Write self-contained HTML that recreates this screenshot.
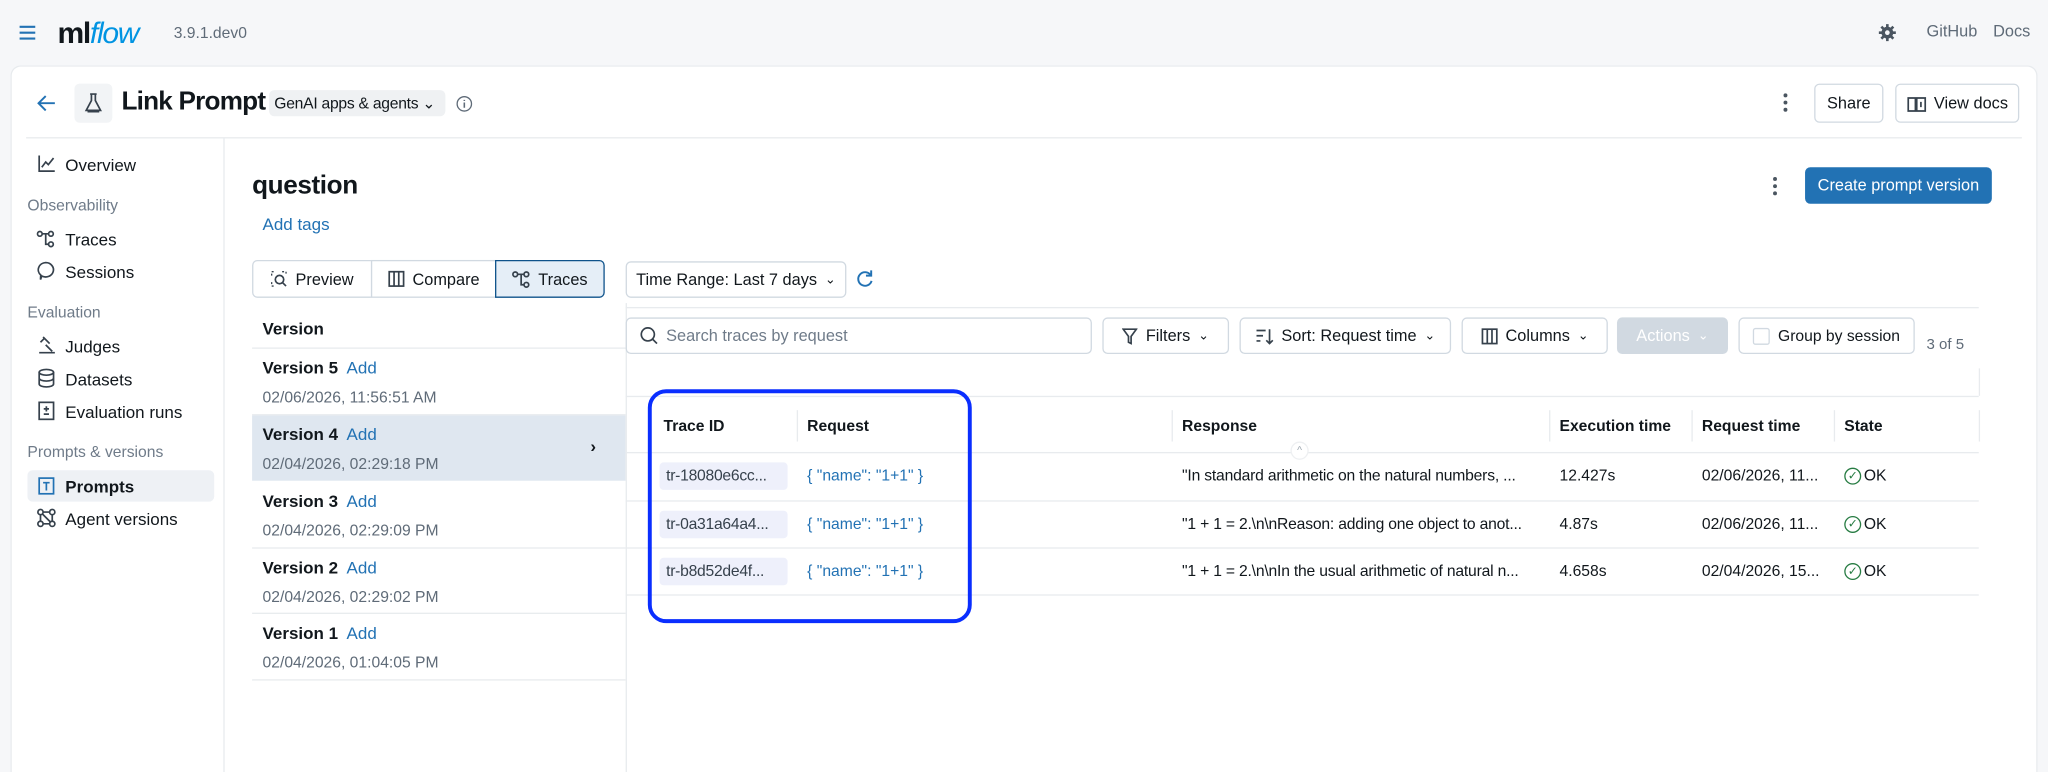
<!DOCTYPE html>
<html><head><meta charset="utf-8"><style>
*{box-sizing:border-box;margin:0;padding:0}
html,body{width:2048px;height:772px;overflow:hidden;background:#f6f7f9}
#w{position:absolute;left:0;top:0;width:1568px;height:591px;overflow:hidden;transform:scale(1.30612,1.3063);transform-origin:0 0;font-family:"Liberation Sans",Arial,sans-serif;color:#11171c;font-size:13px}
.a{position:absolute;white-space:nowrap}
.card{position:absolute;left:8px;top:50px;width:1552px;height:541px;background:#fff;border-radius:8px 8px 0 0;border:1px solid #e8ebee;border-bottom:none}
.hl{position:absolute;background:#e8ebee;height:1px}
.vl{position:absolute;background:#e8ebee;width:1px}
.btn{position:absolute;border:1px solid #d1d9e1;border-radius:4px;background:#fff;display:flex;align-items:center;justify-content:center;gap:6px;font-size:12.5px;color:#11171c}
.sec{color:#6f7b89;font-size:12px}
.blue{color:#2272b4}
.gray{color:#5f6b78}
.ic{stroke:#36414c;fill:none;stroke-width:1.3}
.ok{display:inline-block;width:13px;height:13px;border:1.3px solid #277c43;border-radius:50%;color:#277c43;font-size:9px;text-align:center;line-height:11px;vertical-align:middle;margin-right:2px}
</style></head><body><div id="w">
<svg class="a" style="left:14px;top:19px" width="14" height="12"><path d="M1 1.5h12M1 6h12M1 10.5h12" stroke="#2272b4" stroke-width="1.6"/></svg>
<div class="a" style="left:44px;top:12px;font-size:23px;font-weight:bold;letter-spacing:-1px;color:#11171c">ml<span style="color:#0194e2;font-style:italic;font-weight:normal">flow</span></div>
<div class="a gray" style="left:133px;top:18px;font-size:12px">3.9.1.dev0</div>
<svg class="a" style="left:1438px;top:18px" width="14" height="14" viewBox="0 0 14 14"><circle cx="7" cy="7" r="4.5" fill="#4a5560"/><circle cx="7" cy="7" r="1.8" fill="#f6f7f9"/><path d="M7 0.5v3M7 10.5v3M0.5 7h3M10.5 7h3M2.4 2.4l2 2M9.6 9.6l2 2M2.4 11.6l2-2M9.6 4.4l2-2" stroke="#4a5560" stroke-width="2"/></svg>
<div class="a gray" style="left:1475px;top:17px;font-size:12.5px">GitHub</div>
<div class="a gray" style="left:1526px;top:17px;font-size:12.5px">Docs</div>

<div class="card"></div>
<svg class="a" style="left:28px;top:72px" width="15" height="14"><path d="M14 7H2M7 1.5L1.5 7 7 12.5" stroke="#2272b4" stroke-width="1.5" fill="none"/></svg>
<div class="a" style="left:57px;top:64px;width:29px;height:30px;background:#f2f4f6;border-radius:4px"></div>
<svg class="a" style="left:64px;top:71px" width="15" height="16"><path d="M5 1h5M6 1v5L2 13.5h11L9 6V1" class="ic"/><path d="M3 14.5h9" class="ic"/></svg>
<div class="a" style="left:93px;top:67px;font-size:20px;font-weight:bold;letter-spacing:-0.6px">Link Prompt</div>
<div class="a" style="left:206px;top:69px;width:135px;height:20px;background:#eff1f3;border-radius:4px;font-size:12px;padding:3px 4px;letter-spacing:-0.2px">GenAI apps &amp; agents ⌄</div>
<svg class="a" style="left:349px;top:73px" width="13" height="13"><circle cx="6.5" cy="6.5" r="5.5" fill="none" stroke="#5f6b78"/><path d="M6.5 5.5v4M6.5 3.5v.8" stroke="#5f6b78" stroke-width="1.2"/></svg>
<svg class="a" style="left:1365px;top:71px" width="4" height="15"><circle cx="2" cy="2" r="1.5" fill="#4a5560"/><circle cx="2" cy="7.5" r="1.5" fill="#4a5560"/><circle cx="2" cy="13" r="1.5" fill="#4a5560"/></svg>
<div class="btn" style="left:1389px;top:64px;width:53px;height:30px">Share</div>
<div class="btn" style="left:1451px;top:64px;width:95px;height:30px"><svg width="15" height="13"><path d="M1 2h5.5v10H1zM7.5 2H14v10H7.5z" class="ic"/><path d="M10.7 5v4" class="ic"/></svg>View docs</div>
<div class="hl" style="left:20px;top:105px;width:1528px"></div>

<div class="vl" style="left:171px;top:106px;height:485px"></div>
<svg class="a" style="left:29px;top:119px" width="13" height="13"><path d="M1 0v12h12M3 9l3-4 2 2 4-5" class="ic"/></svg>
<div class="a" style="left:50px;top:119px">Overview</div>
<div class="a sec" style="left:21px;top:150px">Observability</div>
<svg class="a" style="left:28px;top:176px" width="14" height="14"><circle cx="2.5" cy="3" r="1.8" class="ic"/><circle cx="11" cy="3" r="1.8" class="ic"/><circle cx="11" cy="11" r="1.8" class="ic"/><path d="M4.3 3h5M7 3v8h2.2" class="ic"/></svg>
<div class="a" style="left:50px;top:176px">Traces</div>
<svg class="a" style="left:28px;top:200px" width="14" height="15"><path d="M7 1a6 5.5 0 1 1-3 10.3L3 14l.2-3.5A6 5.5 0 0 1 7 1z" class="ic"/></svg>
<div class="a" style="left:50px;top:201px">Sessions</div>
<div class="a sec" style="left:21px;top:232px">Evaluation</div>
<svg class="a" style="left:29px;top:257px" width="14" height="14"><path d="M4 1l5 5M2 5l3-3M1 13h12M6 7l5 5" class="ic"/></svg>
<div class="a" style="left:50px;top:258px">Judges</div>
<svg class="a" style="left:29px;top:282px" width="13" height="15"><ellipse cx="6.5" cy="3" rx="5.5" ry="2.2" class="ic"/><path d="M1 3v9c0 1.3 2.5 2.2 5.5 2.2S12 13.3 12 12V3M1 7.5c0 1.3 2.5 2.2 5.5 2.2S12 8.8 12 7.5" class="ic"/></svg>
<div class="a" style="left:50px;top:283px">Datasets</div>
<svg class="a" style="left:29px;top:307px" width="13" height="15"><rect x="1" y="1" width="11" height="13" class="ic"/><path d="M6.5 4v4M4.5 6h4M4.5 10h4" class="ic"/></svg>
<div class="a" style="left:50px;top:308px">Evaluation runs</div>
<div class="a sec" style="left:21px;top:339px">Prompts &amp; versions</div>
<div class="a" style="left:21px;top:360px;width:143px;height:24px;background:#eef1f5;border-radius:4px"></div>
<svg class="a" style="left:29px;top:365px" width="13" height="14"><rect x="1" y="1" width="11" height="12" stroke="#2272b4" fill="none" stroke-width="1.3"/><path d="M4 4.5h5M6.5 4.5v6" stroke="#2272b4" stroke-width="1.3"/></svg>
<div class="a" style="left:50px;top:365px;font-weight:bold">Prompts</div>
<svg class="a" style="left:28px;top:389px" width="15" height="15"><circle cx="3" cy="3" r="2" class="ic"/><circle cx="12" cy="3" r="2" class="ic"/><circle cx="3" cy="12" r="2" class="ic"/><circle cx="12" cy="12" r="2" class="ic"/><path d="M5 3h5M3 5v5M5 12h5M12 5v5M4.5 4.5l6 6" class="ic"/></svg>
<div class="a" style="left:50px;top:390px">Agent versions</div>

<div class="a" style="left:193px;top:131px;font-size:20px;font-weight:bold;letter-spacing:-0.3px">question</div>
<div class="a blue" style="left:201px;top:164px">Add tags</div>
<svg class="a" style="left:1357px;top:135px" width="4" height="15"><circle cx="2" cy="2" r="1.5" fill="#4a5560"/><circle cx="2" cy="7.5" r="1.5" fill="#4a5560"/><circle cx="2" cy="13" r="1.5" fill="#4a5560"/></svg>
<div class="a" style="left:1382px;top:128px;width:143px;height:28px;background:#2272b4;border-radius:4px;color:#fff;text-align:center;line-height:28px;font-size:12.5px">Create prompt version</div>

<div class="btn" style="left:193px;top:199px;width:92px;height:29px;border-radius:4px 0 0 4px"><svg width="13" height="13"><path d="M1 4V1h3M9 1h3v3M1 9v3h3" stroke="#36414c" fill="none" stroke-dasharray="1.5 1.5"/><circle cx="7" cy="7" r="3.2" class="ic"/><path d="M9.3 9.3L12 12" class="ic"/></svg>Preview</div>
<div class="btn" style="left:284px;top:199px;width:96px;height:29px;border-radius:0"><svg width="13" height="13"><rect x="1" y="1" width="11" height="11" class="ic"/><path d="M4.7 1v11M8.3 1v11" class="ic"/></svg>Compare</div>
<div class="btn" style="left:379px;top:199px;width:84px;height:29px;border-radius:0 4px 4px 0;background:#e5eef7;border-color:#0e538b"><svg width="14" height="14"><circle cx="2.5" cy="3" r="1.8" class="ic"/><circle cx="11" cy="3" r="1.8" class="ic"/><circle cx="11" cy="11" r="1.8" class="ic"/><path d="M4.3 3h5M7 3v8h2.2" class="ic"/></svg>Traces</div>

<div class="a" style="left:201px;top:244px;font-weight:bold">Version</div>
<div class="hl" style="left:193px;top:266px;width:286px"></div>
<div class="a" style="left:193px;top:318px;width:286px;height:50px;background:#dfe7f0"></div>
<div class="a" style="left:452px;top:334px;font-weight:bold">›</div>
<div class="a" style="left:201px;top:274px"><b>Version 5</b>&nbsp; <span class="blue">Add</span></div><div class="a gray" style="left:201px;top:297px;font-size:12px">02/06/2026, 11:56:51 AM</div>
<div class="hl" style="left:193px;top:317px;width:286px"></div>
<div class="a" style="left:201px;top:325px"><b>Version 4</b>&nbsp; <span class="blue">Add</span></div><div class="a gray" style="left:201px;top:348px;font-size:12px">02/04/2026, 02:29:18 PM</div>
<div class="a" style="left:201px;top:376px"><b>Version 3</b>&nbsp; <span class="blue">Add</span></div><div class="a gray" style="left:201px;top:399px;font-size:12px">02/04/2026, 02:29:09 PM</div>
<div class="hl" style="left:193px;top:419px;width:286px"></div>
<div class="a" style="left:201px;top:427px"><b>Version 2</b>&nbsp; <span class="blue">Add</span></div><div class="a gray" style="left:201px;top:450px;font-size:12px">02/04/2026, 02:29:02 PM</div>
<div class="hl" style="left:193px;top:469px;width:286px"></div>
<div class="a" style="left:201px;top:477px"><b>Version 1</b>&nbsp; <span class="blue">Add</span></div><div class="a gray" style="left:201px;top:500px;font-size:12px">02/04/2026, 01:04:05 PM</div>
<div class="hl" style="left:193px;top:520px;width:286px"></div>
<div class="vl" style="left:479px;top:232px;height:359px"></div>

<div class="btn" style="left:479px;top:200px;width:169px;height:28px">Time Range: Last 7 days <span style="font-size:10px">⌄</span></div>
<svg class="a" style="left:655px;top:206px" width="14" height="15"><path d="M11.5 4.5A5.2 5.2 0 1 0 12.3 9" stroke="#2272b4" stroke-width="1.5" fill="none"/><path d="M12 1v4H8" stroke="#2272b4" stroke-width="1.5" fill="none"/></svg>
<div class="hl" style="left:479px;top:235px;width:1036px"></div>
<div class="btn" style="left:479px;top:243px;width:357px;height:28px;justify-content:flex-start;padding-left:10px;color:#6f7b89"><svg width="14" height="14"><circle cx="6" cy="6" r="5" class="ic"/><path d="M9.7 9.7L13 13" class="ic"/></svg>Search traces by request</div>
<div class="btn" style="left:844px;top:243px;width:97px;height:28px"><svg width="12" height="13"><path d="M1 1h10L7 6.5V12L5 11V6.5z" class="ic"/></svg>Filters <span style="font-size:10px">⌄</span></div>
<div class="btn" style="left:949px;top:243px;width:162px;height:28px"><svg width="14" height="13"><path d="M1 2h7M1 6h5M1 10h3M11 1v11M8.5 9.5L11 12l2.5-2.5" class="ic"/></svg>Sort: Request time <span style="font-size:10px">⌄</span></div>
<div class="btn" style="left:1119px;top:243px;width:112px;height:28px"><svg width="13" height="13"><rect x="1" y="1" width="11" height="11" class="ic"/><path d="M4.7 1v11M8.3 1v11" class="ic"/></svg>Columns <span style="font-size:10px">⌄</span></div>
<div class="btn" style="left:1238px;top:243px;width:85px;height:28px;background:#d1d9e1;border-color:#d1d9e1;color:#fff">Actions <span style="font-size:10px">⌄</span></div>
<div class="btn" style="left:1331px;top:243px;width:135px;height:28px;font-size:12px"><span style="display:inline-block;width:13px;height:13px;border:1px solid #d1d9e1;border-radius:2px"></span>Group by session</div>
<div class="a gray" style="left:1475px;top:258px;font-size:11.5px">3 of 5</div>
<div class="vl" style="left:1515px;top:282px;height:21px"></div>
<div class="hl" style="left:479px;top:303px;width:1036px"></div>

<div class="a" style="left:508px;top:319px;font-weight:bold;font-size:12px">Trace ID</div>
<div class="a" style="left:618px;top:319px;font-weight:bold;font-size:12px">Request</div>
<div class="a" style="left:905px;top:319px;font-weight:bold;font-size:12px">Response</div>
<div class="a" style="left:1194px;top:319px;font-weight:bold;font-size:12px">Execution time</div>
<div class="a" style="left:1303px;top:319px;font-weight:bold;font-size:12px">Request time</div>
<div class="a" style="left:1412px;top:319px;font-weight:bold;font-size:12px">State</div>
<div class="vl" style="left:610px;top:314px;height:24px"></div><div class="vl" style="left:897px;top:314px;height:24px"></div><div class="vl" style="left:1186px;top:314px;height:24px"></div><div class="vl" style="left:1295px;top:314px;height:24px"></div><div class="vl" style="left:1404px;top:314px;height:24px"></div><div class="vl" style="left:1515px;top:314px;height:24px"></div>
<div class="hl" style="left:479px;top:346px;width:1036px"></div>
<div class="a" style="left:988px;top:338px;width:14px;height:14px;border-radius:7px;background:#fff;border:1px solid #eef0f2;font-size:8px;color:#9aa4ad;text-align:center;line-height:12px">^</div>

<div class="a" style="left:505px;top:354px;width:98px;height:21px;background:#eef0fb;border-radius:3px;font-size:12px;padding:3px 5px;color:#36414c;letter-spacing:-0.2px">tr-18080e6cc...</div>
<div class="a blue" style="left:618px;top:357px;font-size:12px">{ "name": "1+1" }</div>
<div class="a" style="left:905px;top:357px;font-size:12px;letter-spacing:-0.15px">"In standard arithmetic on the natural numbers, ...</div>
<div class="a" style="left:1194px;top:357px;font-size:12px">12.427s</div>
<div class="a" style="left:1303px;top:357px;font-size:12px">02/06/2026, 11...</div>
<div class="a" style="left:1412px;top:357px;font-size:12px"><span class="ok">✓</span>OK</div>
<div class="hl" style="left:479px;top:383px;width:1036px"></div>

<div class="a" style="left:505px;top:391px;width:98px;height:21px;background:#eef0fb;border-radius:3px;font-size:12px;padding:3px 5px;color:#36414c;letter-spacing:-0.2px">tr-0a31a64a4...</div>
<div class="a blue" style="left:618px;top:394px;font-size:12px">{ "name": "1+1" }</div>
<div class="a" style="left:905px;top:394px;font-size:12px;letter-spacing:-0.15px">"1 + 1 = 2.\n\nReason: adding one object to anot...</div>
<div class="a" style="left:1194px;top:394px;font-size:12px">4.87s</div>
<div class="a" style="left:1303px;top:394px;font-size:12px">02/06/2026, 11...</div>
<div class="a" style="left:1412px;top:394px;font-size:12px"><span class="ok">✓</span>OK</div>
<div class="hl" style="left:479px;top:419px;width:1036px"></div>

<div class="a" style="left:505px;top:427px;width:98px;height:21px;background:#eef0fb;border-radius:3px;font-size:12px;padding:3px 5px;color:#36414c;letter-spacing:-0.2px">tr-b8d52de4f...</div>
<div class="a blue" style="left:618px;top:430px;font-size:12px">{ "name": "1+1" }</div>
<div class="a" style="left:905px;top:430px;font-size:12px;letter-spacing:-0.15px">"1 + 1 = 2.\n\nIn the usual arithmetic of natural n...</div>
<div class="a" style="left:1194px;top:430px;font-size:12px">4.658s</div>
<div class="a" style="left:1303px;top:430px;font-size:12px">02/04/2026, 15...</div>
<div class="a" style="left:1412px;top:430px;font-size:12px"><span class="ok">✓</span>OK</div>
<div class="hl" style="left:479px;top:455px;width:1036px"></div>

<div class="a" style="left:496px;top:298px;width:248px;height:179px;border:3px solid #0a2eff;border-radius:14px"></div>
</div></body></html>
